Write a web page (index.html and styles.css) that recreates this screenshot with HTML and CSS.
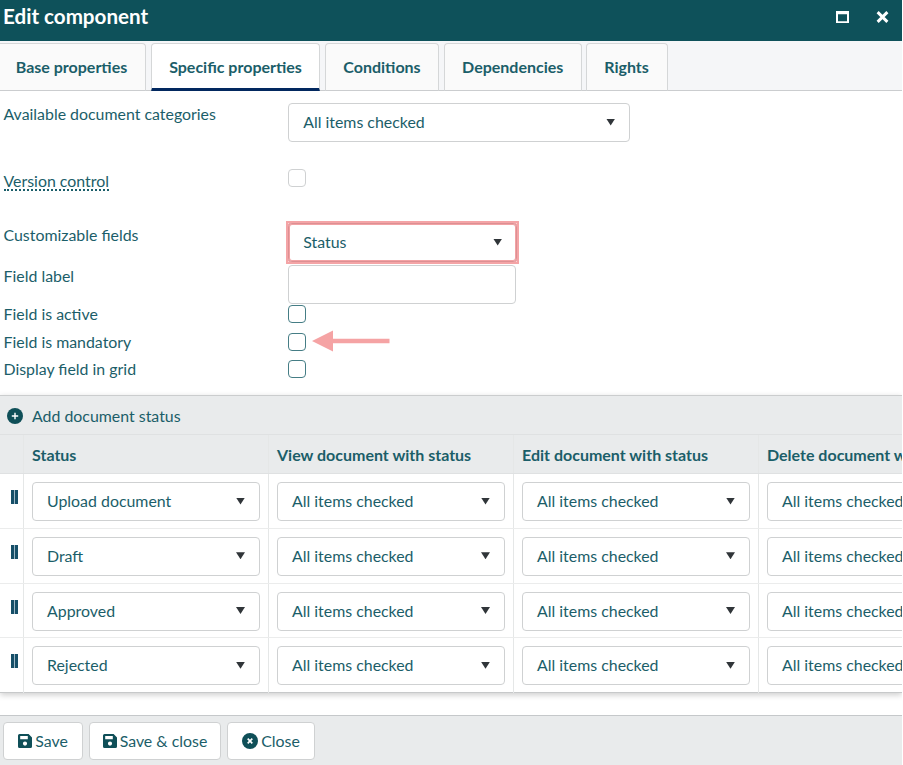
FILE: index.html
```html
<!DOCTYPE html>
<html lang="en">
<head>
<meta charset="utf-8">
<title>Edit component</title>
<link rel="stylesheet" href="styles.css">
</head>
<body>
<svg width="0" height="0" class="defs" aria-hidden="true">
  <symbol id="save" viewBox="0 0 14 14"><path fill-rule="evenodd" d="M1.5 0H10.6L14 3.4V12.5Q14 14 12.500 14H1.500Q0 14 0 12.500V1.500Q0 0 1.500 0ZM2.200 2V5.300H9.800V2ZM7 7.500A2.100 2.100 0 1 0 7 11.700A2.100 2.100 0 1 0 7 7.500Z"/></symbol>
</svg>
<div class="dialog">
  <header class="titlebar">
    <h1>Edit component</h1>
    <div class="window-buttons">
      <svg width="13" height="12" viewBox="0 0 13 12"><path fill="#fff" fill-rule="evenodd" d="M0 0H13V12H0ZM2 3.200V10.300H11V3.200Z"/></svg>
      <svg width="13" height="12" viewBox="0 0 12 11"><path d="M1.500 1L10.500 10M10.500 1L1.500 10" stroke="#fff" stroke-width="2.700"/></svg>
    </div>
  </header>
  <nav class="tabs">
    <a class="tab first">Base properties</a>
    <a class="tab active">Specific properties</a>
    <a class="tab conditions">Conditions</a>
    <a class="tab dependencies">Dependencies</a>
    <a class="tab rights">Rights</a>
  </nav>
  <main class="form">
    <div class="row categories"><label>Available document categories</label><div class="select wide">All items checked<i class="caret"></i></div></div>
    <div class="row version"><label><span class="hint">Version control</span></label><span class="check muted"></span></div>
    <div class="row custom"><label>Customizable fields</label><div class="select marked">Status<i class="caret"></i></div></div>
    <div class="row field"><label>Field label</label><div class="select"></div></div>
    <div class="row option"><label>Field is active</label><span class="check"></span></div>
    <div class="row option"><label>Field is mandatory</label><span class="check"></span>
      <svg class="arrow" width="78" height="22" viewBox="0 0 78 22"><path fill="#f5a3a4" d="M0 11L21 0.500V8.800H77.500V13.200H21V21.500Z"/></svg>
    </div>
    <div class="row option"><label>Display field in grid</label><span class="check"></span></div>
  </main>
  <section class="grid">
    <div class="toolbar">
      <svg width="16" height="16" viewBox="0 0 16 16"><circle cx="8" cy="8" r="8" fill="#0f4f58"/><path d="M8 4.800V11.200M4.800 8H11.200" stroke="#fff" stroke-width="1.400"/></svg>
      Add document status
    </div>
    <div class="line head"><div></div><div>Status</div><div>View document with status</div><div>Edit document with status</div><div>Delete document with status</div></div>
    <div class="line"><div><i class="handle"></i></div><div><div class="select">Upload document<i class="caret"></i></div></div><div><div class="select">All items checked<i class="caret"></i></div></div><div><div class="select">All items checked<i class="caret"></i></div></div><div><div class="select">All items checked<i class="caret"></i></div></div></div>
    <div class="line"><div><i class="handle"></i></div><div><div class="select">Draft<i class="caret"></i></div></div><div><div class="select">All items checked<i class="caret"></i></div></div><div><div class="select">All items checked<i class="caret"></i></div></div><div><div class="select">All items checked<i class="caret"></i></div></div></div>
    <div class="line"><div><i class="handle"></i></div><div><div class="select">Approved<i class="caret"></i></div></div><div><div class="select">All items checked<i class="caret"></i></div></div><div><div class="select">All items checked<i class="caret"></i></div></div><div><div class="select">All items checked<i class="caret"></i></div></div></div>
    <div class="line"><div><i class="handle"></i></div><div><div class="select">Rejected<i class="caret"></i></div></div><div><div class="select">All items checked<i class="caret"></i></div></div><div><div class="select">All items checked<i class="caret"></i></div></div><div><div class="select">All items checked<i class="caret"></i></div></div></div>
  </section>
  <footer class="actions">
    <button class="save"><svg width="14" height="14"><use href="#save"/></svg>Save</button>
    <button class="save-close"><svg width="14" height="14"><use href="#save"/></svg>Save &amp; close</button>
    <button class="close"><svg width="16" height="16" viewBox="0 0 16 16"><circle cx="8" cy="8" r="8"/><path d="M5.700 5.700L10.300 10.300M10.300 5.700L5.700 10.300" stroke="#fff" stroke-width="1.700"/></svg>Close</button>
  </footer>
</div>
</body>
</html>
```
FILE: styles.css
```css
* { box-sizing: border-box; }
body { margin: 0; background: #fff; color: #1b5e69; font: 15.9px/20px Lato, sans-serif; overflow: hidden; }
.defs { position: absolute; }
.dialog { width: 902px; height: 765px; overflow: hidden; display: flex; flex-direction: column; }
.titlebar { height: 41px; flex: none; background: #0e515a; color: #fff; display: flex; justify-content: space-between; padding: 0 13px 0 3px; }
h1 { margin: 4px 0 0; font-size: 20.6px; line-height: 24px; font-weight: 700; }
.window-buttons { display: flex; gap: 27px; padding-top: 11px; }
.tabs { height: 50px; flex: none; background: #f5f6f8; border-bottom: 1px solid #cbcdcf; display: flex; gap: 5px; padding-top: 2px; }
.tab { height: 48px; border: 1px solid #d5d7d8; border-bottom-color: #cbcdcf; border-radius: 4px 4px 0 0; background: #fafafa; font-size: 16px; font-weight: 700; text-align: center; line-height: 46px; width: 114px; white-space: nowrap; }
.tab.first { width: 147px; margin-left: -1px; border-left: 0; border-top-left-radius: 0; padding-right: 1px; }
.tab.active { width: 169px; background: #fff; border-bottom: 3px solid #02285f; }
.tab.dependencies { width: 137.5px; }
.tab.rights { width: 82px; margin-left: -0.5px; padding-right: 1px; }
.form { height: 304px; flex: none; padding-left: 3.5px; }
.row { display: flex; align-items: flex-start; }
.row label { width: 284.7px; }
.categories { height: 79px; padding-top: 12px; }
.version { height: 53px; }
.custom { height: 41px; }
.field { height: 41px; }
.option { height: 27.5px; }
.categories label { margin-top: 1px; }
.version label { margin-top: 1px; }
.custom label { margin-top: 2px; }
.field label { margin-top: 2px; }
.option label { margin-top: -1px; }
.version .check { margin-top: -0.6px; }
.hint { border-bottom: 2px dotted #1b5e69; display: inline-block; line-height: 17px; }
.select { width: 228px; height: 39px; border: 1px solid #cfd1d2; border-radius: 4px; background: #fff; display: flex; align-items: center; justify-content: space-between; padding: 0 14px 1px; font-weight: 400; white-space: nowrap; }
.select.wide { width: 342px; }
.field .select { margin-top: 0.6px; }
.select.marked { width: 229px; border-color: #dc9093; border-radius: 4px; box-shadow: inset 0 0 0 1px #f2a2a4, 0 0 0 1px #f4a4a6; position: relative; }
.select.marked::after { content: ""; position: absolute; inset: -3px; border: 2px solid #f4a4a6; }
.caret { width: 9px; height: 7px; background: #303539; clip-path: polygon(0 0, 100% 0, 50% 100%); }
.check { width: 18px; height: 18px; border: 1.5px solid #457d85; border-radius: 4px; }
.check.muted { border-color: #cfd1d2; }
.arrow { margin: -2.5px 0 0 6px; }
.grid { flex: none; height: 298px; border-top: 1px solid #cbcdce; border-bottom: 1px solid #c7c9ca; box-shadow: 0 2px 6px rgba(0,0,0,.2); overflow: visible; }
.toolbar { height: 38px; background: #e9ebec; display: flex; align-items: center; gap: 9px; padding: 2px 0 0 7px; }
.line { height: 54.75px; display: grid; grid-template-columns: 24px repeat(4, 245px); width: 902px; overflow: hidden; border-bottom: 1px solid #ebecec; }
.line:last-child { border-bottom: 0; }
.line > div { border-right: 1px solid #e5e7e7; padding: 8px 8px 0; }
.line > div:first-child { padding: 16px 0 0 10.5px; }
.line.head { height: 40px; background: #e9ebec; border-top: 1px solid #dfe1e2; border-bottom: 1px solid #dfe1e2; font-size: 16px; font-weight: 700; }
.line.head > div { padding-top: 10px; white-space: nowrap; }
.handle { display: block; width: 7px; height: 14px; background: linear-gradient(90deg, #164f68 0 3px, #9db8c6 3px 4px, #164f68 4px); }
.actions { flex: 1; margin-top: 22px; border-top: 1px solid #c5c8ca; background: #e9ebec; display: flex; align-items: flex-start; gap: 6px; padding: 6px 3px; }
button { height: 38px; border: 1px solid #cfd1d2; border-radius: 4px; background: #fff; color: inherit; font: inherit; display: flex; align-items: center; justify-content: center; gap: 3px; padding: 0; white-space: nowrap; }
button svg { fill: #0f4f58; }
.save { width: 80px; }
.save-close { width: 132px; }
.close { width: 88px; }
```
